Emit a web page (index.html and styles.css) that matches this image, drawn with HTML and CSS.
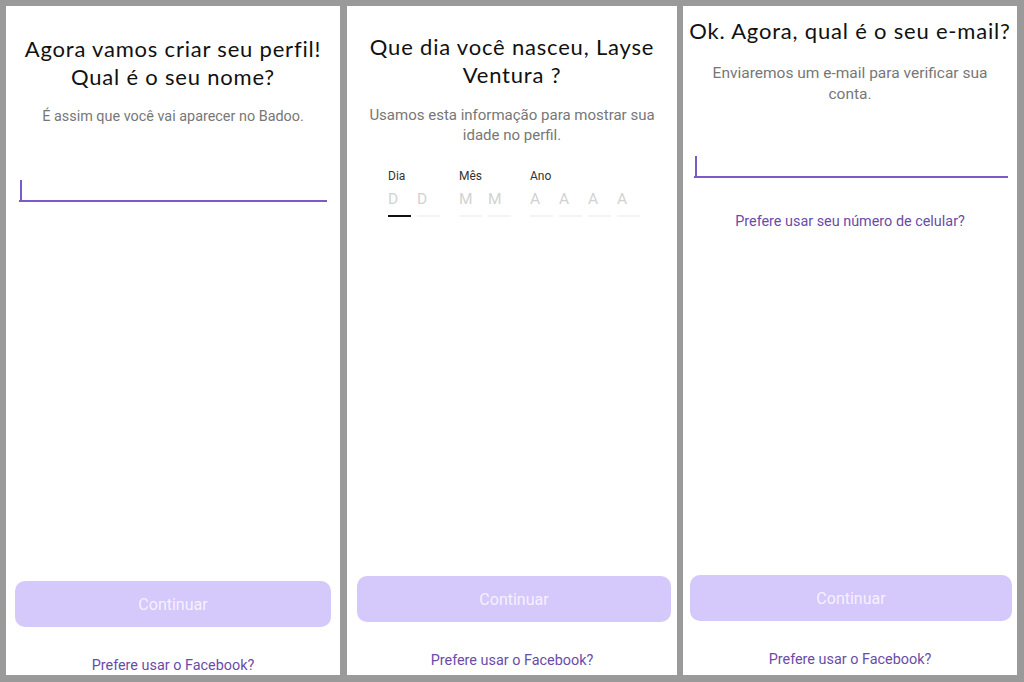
FILE: index.html
```html
<!DOCTYPE html>
<html>
<head>
    <meta charset="UTF-8">
    <title>Badoo - Cadastro</title>
    <link rel="stylesheet" href="styles.css">
</head>
<body>
    <div class="strip">

        <div class="panel panel-name">
            <h1 class="title">Agora vamos criar seu perfil!<br>Qual é o seu nome?</h1>
            <p class="hint">É assim que você vai aparecer no Badoo.</p>
            <div class="field"><span class="caret"></span></div>
            <button class="btn">Continuar</button>
            <a class="alt-link" href="#">Prefere usar o Facebook?</a>
        </div>

        <div class="panel panel-birth">
            <h1 class="title">Que dia você nasceu, Layse<br>Ventura ?</h1>
            <p class="hint">Usamos esta informação para mostrar sua<br>idade no perfil.</p>
            <div class="date">
                <div class="date-group">
                    <span class="date-label">Dia</span>
                    <div class="cells">
                        <span class="cell active">D</span>
                        <span class="cell">D</span>
                    </div>
                </div>
                <div class="date-group">
                    <span class="date-label">Mês</span>
                    <div class="cells">
                        <span class="cell">M</span>
                        <span class="cell">M</span>
                    </div>
                </div>
                <div class="date-group">
                    <span class="date-label">Ano</span>
                    <div class="cells">
                        <span class="cell">A</span>
                        <span class="cell">A</span>
                        <span class="cell">A</span>
                        <span class="cell">A</span>
                    </div>
                </div>
            </div>
            <button class="btn">Continuar</button>
            <a class="alt-link" href="#">Prefere usar o Facebook?</a>
        </div>

        <div class="panel panel-email">
            <h1 class="title">Ok. Agora, qual é o seu e-mail?</h1>
            <p class="hint">Enviaremos um e-mail para verificar sua<br>conta.</p>
            <div class="field"><span class="caret"></span></div>
            <a class="alt-link phone-link" href="#">Prefere usar seu número de celular?</a>
            <button class="btn">Continuar</button>
            <a class="alt-link" href="#">Prefere usar o Facebook?</a>
        </div>

    </div>
</body>
</html>
```

FILE: styles.css
```css
body { margin: 0; background: #9a9a9a; font-family: Roboto, "Liberation Sans", sans-serif; }
.strip { display: flex; gap: 7px; padding: 6px 7px 7px 6px; height: 669px; }
.panel { display: flex; flex-direction: column; background: #fff; overflow: hidden; width: 334px; flex-shrink: 0; }
.panel-birth { width: 330px; margin-right: -1px; }

.title { margin: 0; font-family: Lato, "Noto Sans", sans-serif; font-weight: 400; font-size: 22px; letter-spacing: 0.8px; line-height: 28px; text-align: center; color: #111; }
.hint { margin: 15px 0 0; font-size: 14.4px; line-height: 21px; text-align: center; color: #777; }

.field { height: 20px; border-bottom: 2px solid #7b5cc6; display: flex; align-items: stretch; }
.caret { width: 2px; background: #7b5cc6; margin-left: 1px; }

.date { display: flex; gap: 19px; justify-content: center; margin: 23px 0 0 4px; }
.date-group { display: flex; flex-direction: column; gap: 5px; }
.date-label { font-size: 12px; line-height: 16px; color: #333; }
.cells { display: flex; gap: 6px; }
.cell { width: 23px; font-size: 15.5px; line-height: 20px; padding-bottom: 6px; color: #d2d2d2; border-bottom: 2px solid #f4f4f4; }
.cell.active { border-bottom-color: #111; }

.btn { margin-top: auto; height: 46px; border: none; border-radius: 10px; background: #d5c8fb; color: #f5f1ff; font-family: Roboto, "Liberation Sans", sans-serif; font-size: 16px; }
.alt-link { margin-top: 28px; font-size: 14.4px; line-height: 18px; padding-top: 2px; text-align: center; color: #6a4ca8; text-decoration: none; }

.panel-name { padding-top: 29px; }
.panel-name .field { margin: 53px 13px 0; }
.panel-name .btn { margin-left: 9px; margin-right: 9px; }

.panel-birth { padding: 27px 0 5px; }
.panel-birth .hint { font-size: 15px; line-height: 20px; margin-top: 16px; }
.panel-birth .btn { margin-left: 10px; margin-right: 6px; }

.panel-email { padding: 11px 0 6px; }
.panel-email .hint { font-size: 15.5px; margin-top: 18px; }
.panel-email .field { margin: 51px 9px 0 11px; }
.panel-email .phone-link { margin-top: 33px; }
.panel-email .btn { margin-left: 7px; margin-right: 5px; }
```
